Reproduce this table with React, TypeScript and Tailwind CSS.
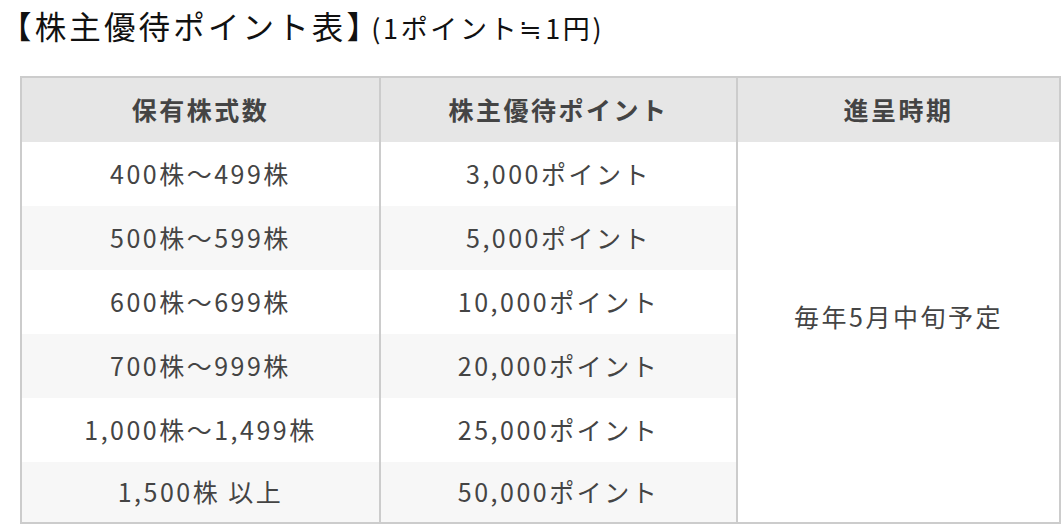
import React from "react";

const rows = [
  ["400株〜499株", "3,000ポイント"],
  ["500株〜599株", "5,000ポイント"],
  ["600株〜699株", "10,000ポイント"],
  ["700株〜999株", "20,000ポイント"],
  ["1,000株〜1,499株", "25,000ポイント"],
  ["1,500株 以上", "50,000ポイント"],
];

export default function App() {
  return (
    <div
      className="w-[1062px] h-[524px] bg-white overflow-hidden"
      style={{ fontFamily: '"Noto Sans CJK JP", "Noto Sans", sans-serif' }}
    >
      <div className="h-[56px] leading-[50px] text-[#111] whitespace-nowrap flex items-baseline">
        <span className="text-[31.5px] tracking-[0.1em]">【株主優待ポイント表】</span>
        <span className="text-[27px] tracking-[0.1em] -ml-[10px]">(1ポイント≒1円)</span>
      </div>
      <div className="mt-[20px] ml-[20px] w-[1041px] border-2 border-[#cccccc] text-[#444] text-[25px] tracking-[0.1em]">
        <div className="grid grid-cols-[359px_357px_321px] grid-rows-[64px_64px_64px_64px_64px_64px_60px]">
          <div className="bg-[#e6e6e6] border-r-2 border-[#cccccc] flex items-center justify-center font-bold">
            保有株式数
          </div>
          <div className="bg-[#e6e6e6] border-r-2 border-[#cccccc] flex items-center justify-center font-bold">
            株主優待ポイント
          </div>
          <div className="bg-[#e6e6e6] flex items-center justify-center font-bold">
            進呈時期
          </div>
          {rows.map((r, i) => (
            <React.Fragment key={i}>
              <div
                className={`${i % 2 === 1 ? "bg-[#f7f7f7]" : "bg-white"} border-r-2 border-[#cccccc] flex items-center justify-center`}
                style={{ gridColumn: 1, gridRow: i + 2 }}
              >
                {r[0]}
              </div>
              <div
                className={`${i % 2 === 1 ? "bg-[#f7f7f7]" : "bg-white"} border-r-2 border-[#cccccc] flex items-center justify-center`}
                style={{ gridColumn: 2, gridRow: i + 2 }}
              >
                {r[1]}
              </div>
            </React.Fragment>
          ))}
          <div
            className="bg-white flex items-center justify-center pb-[30px]"
            style={{ gridColumn: 3, gridRow: "2 / 8" }}
          >
            毎年5月中旬予定
          </div>
        </div>
      </div>
    </div>
  );
}
